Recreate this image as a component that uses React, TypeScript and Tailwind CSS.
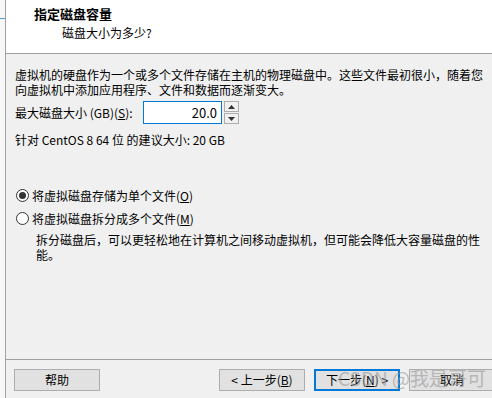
import React from 'react';

const font = { fontFamily: '"Noto Sans CJK SC", "Noto Sans", sans-serif' };

function Radio({ checked, label, mnemonic }: { checked?: boolean; label: string; mnemonic: string }) {
  return (
    <div className="flex items-center h-[16px]">
      <span className="w-[13px] h-[13px] rounded-full border border-[#333] bg-white flex items-center justify-center ml-[1px]">
        {checked && <span className="w-[7px] h-[7px] rounded-full bg-[#333]" />}
      </span>
      <span className="ml-[3px]">
        {label}(<span className="underline">{mnemonic}</span>)
      </span>
    </div>
  );
}

function Button({ children, focused }: { children: React.ReactNode; focused?: boolean }) {
  return (
    <div
      className={
        'w-[86px] h-[22px] shrink-0 flex items-center justify-center bg-[#e1e1e1] ' +
        (focused ? 'border-2 border-[#0078d7]' : 'border border-[#adadad]')
      }
    >
      {children}
    </div>
  );
}

export default function App() {
  return (
    <div className="w-[492px] h-[398px] flex overflow-hidden text-[12px] text-black bg-[#f0f0f0] relative" style={font}>
      {/* window edge on the left */}
      <div className="w-[5px] shrink-0 bg-[#f7f7f7] border-r border-[#a0a0a0] box-content relative">
        <span className="absolute left-0 top-[18px] w-[5px] h-[1px] bg-[#5b9bd5]" />
      </div>

      <div className="flex-1 flex flex-col min-w-0">
        {/* header */}
        <div className="h-[54px] shrink-0 bg-white border-b border-[#a0a0a0] pl-[28px] pt-[5px]">
          <div className="text-[13px] font-bold leading-[18px]">指定磁盘容量</div>
          <div className="pl-[28px] mt-[2px] leading-[16px]">磁盘大小为多少?</div>
        </div>

        {/* body */}
        <div className="flex-1 flex flex-col pl-[9px] pt-[13px] leading-[15px] whitespace-nowrap">
          <p>
            虚拟机的硬盘作为一个或多个文件存储在主机的物理磁盘中。这些文件最初很小，随着您
            <br />
            向虚拟机中添加应用程序、文件和数据而逐渐变大。
          </p>

          <div className="flex items-center mt-[4px] h-[23px]">
            <span className="w-[128px] shrink-0">
              最大磁盘大小 (GB)(<span className="underline">S</span>):
            </span>
            <div className="w-[79px] h-[23px] shrink-0 bg-white border border-[#0078d7] flex items-center justify-end pr-[4px] text-[13px]">
              20.0
            </div>
            <div className="ml-[2px] w-[15px] h-[23px] flex flex-col gap-[1px]">
              <div className="flex-1 border border-[#adadad] bg-[#f0f0f0] flex items-center justify-center">
                <svg width="7" height="4" viewBox="0 0 7 4"><path d="M0 4 L3.5 0 L7 4 Z" fill="#333" /></svg>
              </div>
              <div className="flex-1 border border-[#adadad] bg-[#f0f0f0] flex items-center justify-center">
                <svg width="7" height="4" viewBox="0 0 7 4"><path d="M0 0 L7 0 L3.5 4 Z" fill="#333" /></svg>
              </div>
            </div>
          </div>

          <div className="mt-[8px]">针对 CentOS 8 64 位 的建议大小: 20 GB</div>

          <div className="mt-[40px] flex flex-col gap-[7px]">
            <Radio checked label="将虚拟磁盘存储为单个文件" mnemonic="O" />
            <Radio label="将虚拟磁盘拆分成多个文件" mnemonic="M" />
          </div>

          <p className="mt-[6px] pl-[21px]">
            拆分磁盘后，可以更轻松地在计算机之间移动虚拟机，但可能会降低大容量磁盘的性
            <br />
            能。
          </p>
        </div>

        {/* footer */}
        <div className="h-[39px] shrink-0 border-t border-[#a0a0a0] flex pt-[9px] pl-[8px]">
          <Button>帮助</Button>
          <div className="ml-[119px] flex gap-[9px]">
            <Button>
              &lt; 上一步(<span className="underline">B</span>)
            </Button>
            <Button focused>
              下一步(<span className="underline">N</span>) &gt;
            </Button>
            <Button>取消</Button>
          </div>
        </div>
      </div>

      <span className="absolute left-[338px] top-[366px] text-[19px] leading-[24px] text-[#9a9a9a] opacity-60 whitespace-nowrap pointer-events-none">
        CSDN @我是哥可
      </span>
    </div>
  );
}
